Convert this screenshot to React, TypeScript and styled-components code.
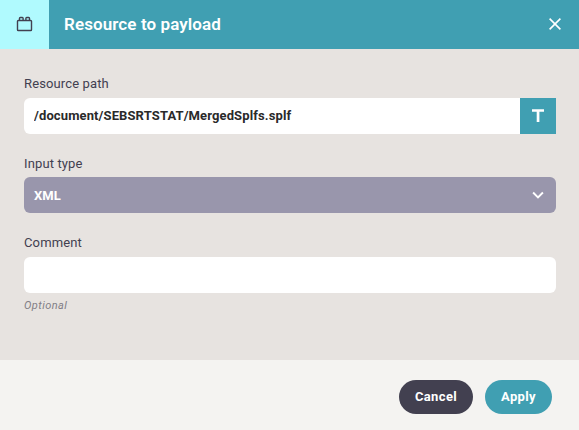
import React from "react";
import styled, { createGlobalStyle } from "styled-components";

const GlobalStyle = createGlobalStyle`
  * { box-sizing: border-box; }
  body { margin: 0; overflow: hidden; }
`;

const Dialog = styled.div`
  display: flex;
  flex-direction: column;
  width: 579px;
  height: 430px;
  background: #e7e3e0;
  color: #424050;
  font-family: Roboto, "Liberation Sans", sans-serif;
  font-size: 13px;
  letter-spacing: 0.13px;
`;

const Header = styled.header`
  display: flex;
  align-items: center;
  height: 49px;
  background: #409fb2;
  color: #fff;
`;

const HeaderIcon = styled.div`
  display: flex;
  align-items: center;
  justify-content: center;
  width: 49px;
  height: 49px;
  padding-bottom: 1px;
  background: #b0fafe;
  color: #424050;
`;

const Title = styled.h1`
  flex: 1;
  margin: 0;
  padding-left: 15px;
  font-size: 17px;
  font-weight: 600;
  line-height: 49px;
  letter-spacing: 0.1px;
`;

const CloseButton = styled.button`
  display: flex;
  padding: 0;
  margin: 0 18px 1px 0;
  border: 0;
  background: none;
  color: #fff;
`;

const Body = styled.main`
  display: flex;
  flex: 1;
  flex-direction: column;
  padding: 25px 23px 0 24px;
`;

const Field = styled.div<{ $height: number }>`
  display: flex;
  flex-direction: column;
  height: ${({ $height }) => $height}px;
`;

const Label = styled.label<{ $offset?: number }>`
  height: 24px;
  padding-top: ${({ $offset = 0 }) => $offset}px;
  line-height: 20px;
`;

const InputGroup = styled.div`
  display: flex;
  height: 36px;
`;

const Input = styled.input<{ $joined?: boolean }>`
  flex: 1;
  min-width: 0;
  height: 36px;
  padding: 0 10px 2px;
  border: 0;
  border-radius: ${({ $joined }) => ($joined ? "6px 0 0 6px" : "6px")};
  background: #fff;
  color: #2a2a2a;
  font: 700 13px Roboto, "Liberation Sans", sans-serif;
  letter-spacing: 0.12px;
`;

const TypeButton = styled.button`
  display: flex;
  align-items: center;
  justify-content: center;
  width: 36px;
  padding: 0 0 1px;
  border: 0;
  background: #409fb2;
  color: #fff;
`;

const Select = styled.button`
  display: flex;
  align-items: center;
  justify-content: space-between;
  height: 36px;
  padding: 0 12px 0 10px;
  border: 0;
  border-radius: 6px;
  background: #9996ac;
  color: #fff;
  font: 700 13px Roboto, "Liberation Sans", sans-serif;
  letter-spacing: 0.1px;
`;

const Hint = styled.span`
  margin-top: 6px;
  color: #817e86;
  font-size: 11px;
  font-style: italic;
  line-height: 14px;
  letter-spacing: 0.45px;
`;

const Footer = styled.footer`
  display: flex;
  align-items: center;
  justify-content: flex-end;
  gap: 12px;
  height: 70px;
  padding: 4px 27px 0 0;
  background: #f4f3f1;
`;

const ActionButton = styled.button<{ $primary?: boolean }>`
  width: ${({ $primary }) => ($primary ? 67 : 74)}px;
  height: 34px;
  padding: 0 0 2px;
  border: 0;
  border-radius: 17px;
  background: ${({ $primary }) => ($primary ? "#409fb2" : "#424050")};
  color: #fff;
  font: 700 13px Roboto, "Liberation Sans", sans-serif;
  letter-spacing: 0.35px;
`;

export default function App() {
  return (
    <>
      <GlobalStyle />
      <Dialog role="dialog" aria-label="Resource to payload">
        <Header>
          <HeaderIcon>
            <svg width="17" height="16" viewBox="0 0 17 16" fill="none" stroke="currentColor" strokeWidth="1.4">
              <rect x="1.5" y="4.5" width="14" height="10" rx="0.8" />
              <path d="M3.5 4.5V2.3q0-.8.8-.8h2q.8 0 .8.8v2.2M9.9 4.5V2.3q0-.8.8-.8h2q.8 0 .8.8v2.2" />
            </svg>
          </HeaderIcon>
          <Title>Resource to payload</Title>
          <CloseButton aria-label="Close">
            <svg width="12" height="12" viewBox="0 0 12 12" fill="none" stroke="currentColor" strokeWidth="1.6">
              <path d="M.6.6l10.8 10.8M11.4.6L.6 11.4" />
            </svg>
          </CloseButton>
        </Header>
        <Body>
          <Field $height={79}>
            <Label>Resource path</Label>
            <InputGroup>
              <Input $joined defaultValue="/document/SEBSRTSTAT/MergedSplfs.splf" />
              <TypeButton aria-label="Text">
                <svg width="12" height="13" viewBox="0 0 12 13" fill="currentColor">
                  <path d="M0 .3h12v2.5H7.4V13H4.7V2.8H0z" />
                </svg>
              </TypeButton>
            </InputGroup>
          </Field>
          <Field $height={80}>
            <Label $offset={1}>Input type</Label>
            <Select>
              XML
              <svg width="12" height="8" viewBox="0 0 12 8" fill="none" stroke="currentColor" strokeWidth="1.9">
                <path d="M1.1 1.5l4.9 4.9 4.9-4.9" />
              </svg>
            </Select>
          </Field>
          <Field $height={90}>
            <Label>Comment</Label>
            <InputGroup>
              <Input aria-label="Comment" />
            </InputGroup>
            <Hint>Optional</Hint>
          </Field>
        </Body>
        <Footer>
          <ActionButton>Cancel</ActionButton>
          <ActionButton $primary>Apply</ActionButton>
        </Footer>
      </Dialog>
    </>
  );
}
